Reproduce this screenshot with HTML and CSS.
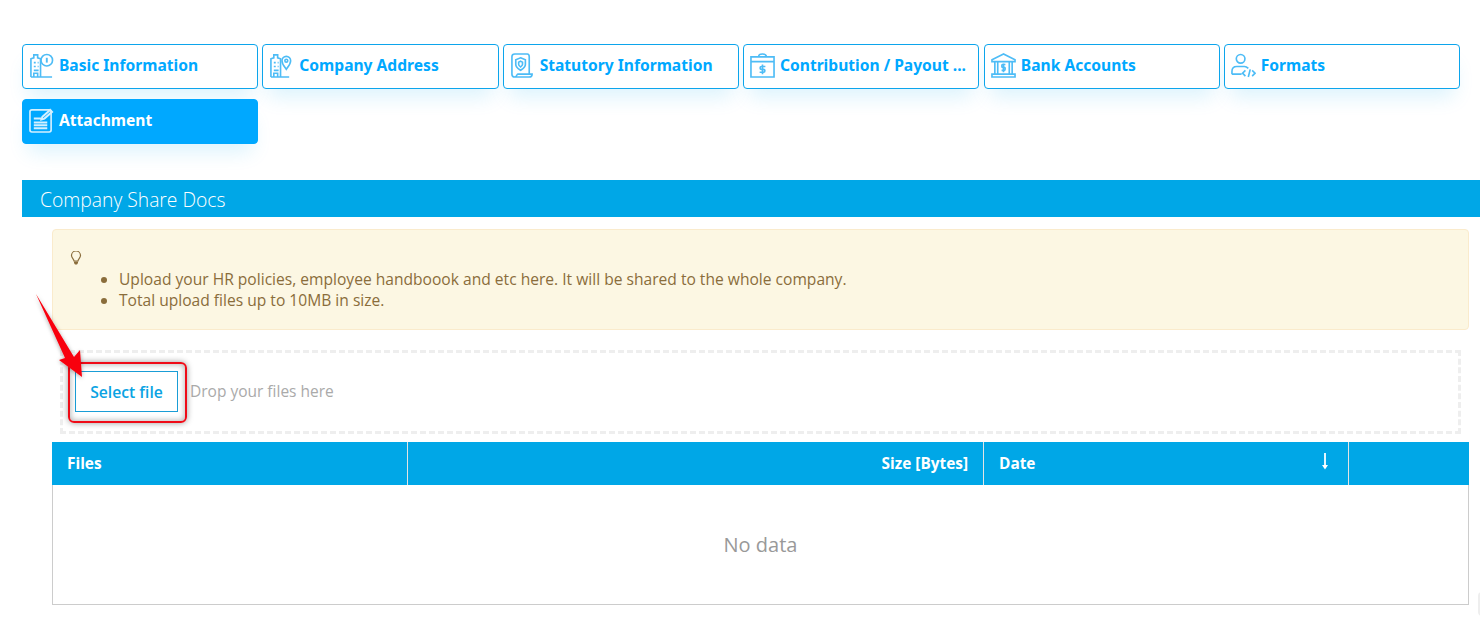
FILE: index.html
```html
<!DOCTYPE html>
<html lang="en">
<head>
<meta charset="utf-8">
<title>Company Share Docs</title>
<link rel="stylesheet" href="styles.css">
</head>
<body>
<div class="page">
  <nav class="tabs">
    <a class="tab">
      <svg class="ico" viewBox="0 0 26 26"><path d="M2 25V6l3-1V2h4v3l3 1v19M2 25h13M15 25h9M5 10h2M9 10h1M5 14h2M9 14h1M5 18h5M5 25v-4h4v4"/><circle cx="18.500" cy="7.500" r="6"/><path class="thick" d="M18.500 5v5"/></svg>
      <span>Basic Information</span>
    </a>
    <a class="tab">
      <svg class="ico" viewBox="0 0 26 26"><path d="M2 25V6l3-1V2h4v3l3 1v19M2 25h19M5 10h2M9 10h1M5 14h2M9 14h1M5 18h5M5 25v-4h4v4"/><path d="M18 17c-2-3-4.500-5.500-4.500-9a4.500 4.500 0 0 1 9 0c0 3.500-2.500 6-4.500 9z"/><circle cx="18" cy="8" r="1.500"/></svg>
      <span>Company Address</span>
    </a>
    <a class="tab">
      <svg class="ico" viewBox="0 0 26 26"><path d="M5 1h13c1 0 2 1 2 3v18M5 1C3 1 2 2 2 4v18c0 2 1 3 3 3h15c2 0 3-1 3-3H8c-1 0-1 3-3 3"/><path d="M11 5l5 2v5c0 3-2 4-5 6-3-2-5-3-5-6V7z"/><path d="M11 8.500l2 1v2.500c0 1-1 1.500-2 2.500-1-1-2-1.500-2-2.500V9.500z"/></svg>
      <span>Statutory Information</span>
    </a>
    <a class="tab">
      <svg class="ico" viewBox="0 0 26 26"><path d="M1 4h24v21H1zM1 9h24M9 4c0-2 1-3 4-3s4 1 4 3M16 14h-4c-2 0-2 3 0 3h2c2 0 2 3 0 3h-4M13 12v10"/></svg>
      <span>Contribution / Payout ...</span>
    </a>
    <a class="tab">
      <svg class="ico" viewBox="0 0 26 26"><path d="M13 1L1 7v2h24V7zM4 9v13M7 9v13M19 9v13M22 9v13M1 22h24v3H1zM15 12h-3c-1 0-1 3 0 3h2c1 0 1 3 0 3h-3M13 11v9"/></svg>
      <span>Bank Accounts</span>
    </a>
    <a class="tab">
      <svg class="ico" viewBox="0 0 26 26"><circle cx="10" cy="6" r="4.500"/><path d="M1 22v-3c0-3 2-5 5-5h8c2 0 3 1 4 2M1 22h10M15 18l-3 3 3 3M22 18l3 3-3 3M20 17l-2 8"/></svg>
      <span>Formats</span>
    </a>
    <a class="tab active">
      <svg class="ico" viewBox="0 0 26 26"><rect x="1" y="2" width="22" height="23" rx="2"/><path class="thick" d="M5 11h9M5 15h14M5 18h14M5 21h14M14 9l8-7 2 2-8 7-3 1z"/></svg>
      <span>Attachment</span>
    </a>
  </nav>

  <h2 class="section-title">Company Share Docs</h2>

  <div class="content">
    <div class="alert">
      <svg class="bulb" viewBox="0 0 12 14"><path d="M4 10c0-2-2.500-3-2.500-5.500a4.500 4.500 0 0 1 9 0C10.500 7 8 8 8 10z"/><path class="bulb-base" d="M4 10.500h4V12l-1 1.500H5L4 12z"/></svg>
      <ul class="alert-list">
        <li>Upload your HR policies, employee handboook and etc here. It will be shared to the whole company.</li>
        <li>Total upload files up to 10MB in size.</li>
      </ul>
    </div>

    <div class="dropzone">
      <button class="select-btn" type="button">Select file</button>
      <span class="drop-hint">Drop your files here</span>
    </div>

    <div class="grid">
      <div class="grid-head">
        <div class="cell files">Files</div>
        <div class="cell size">Size [Bytes]</div>
        <div class="cell date">Date<svg class="sort" viewBox="0 0 8 17"><path d="M4 0v13" /><path class="sort-tip" d="M1 12h6l-3 4.500z"/></svg></div>
        <div class="cell actions"></div>
      </div>
      <div class="grid-empty">No data</div>
    </div>
  </div>
</div>

<div class="callout-box"></div>
<svg class="callout-arrow" viewBox="0 0 60 100"><defs><filter id="sh" x="-30%" y="-30%" width="160%" height="160%"><feDropShadow dx="0" dy="1" stdDeviation="2" flood-color="#000" flood-opacity=".35"/></filter></defs><path d="M5 4L34 68l-6 2 23 17-2-27-6 7z" fill="#f8000f" filter="url(#sh)"/></svg>
<div class="scroll-nub"></div>
</body>
</html>
```
FILE: styles.css
```css
* { box-sizing: border-box; }
html, body { margin: 0; height: 631px; overflow: hidden; background: #fff; }
body { font-family: "Open Sans", "Noto Sans", sans-serif; color: #333; position: relative; }

.page { padding: 44px 0 0 22px; }

.tabs {
  display: grid;
  grid-template-columns: repeat(6, 1fr);
  column-gap: 4px;
  row-gap: 10px;
  width: 1438px;
}
.tab {
  height: 45px;
  display: flex;
  align-items: center;
  gap: 5px;
  padding: 0 6px 3px 6px;
  border: 1px solid #0ca5ec;
  border-radius: 4px;
  background: #fff;
  color: #00a8ff;
  font-family: "Noto Sans", "Open Sans", sans-serif;
  font-size: 15.600px;
  font-weight: 700;
  white-space: nowrap;
  box-shadow: 0 14px 20px -6px rgba(0, 168, 240, .14);
}
.tab:nth-child(5) { margin-left: .5px; }
.tab.active { background: #00a8ff; border-color: #00a8ff; color: #fff; }
.ico {
  width: 25px;
  height: 25px;
  flex: none;
  fill: none;
  stroke: #4dbcf6;
  stroke-width: 1.700;
}
.thick { stroke-width: 2; }
.tab.active .ico { stroke: #d5f0ff; }

.section-title {
  margin: 36px 0 0;
  height: 37px;
  padding-left: 18px;
  background: #00a7e7;
  color: #fff;
  font-size: 19.300px;
  font-weight: 300;
  line-height: 39px;
}

.content { padding: 12px 11px 0 30px; }

.alert {
  height: 101px;
  padding: 21px 17px 0;
  background: #fcf7e3;
  border: 1px solid #faebcc;
  border-radius: 4px;
  color: #8a6d3b;
  font-size: 15.600px;
  line-height: 21px;
}
.bulb { display: block; width: 12px; height: 14px; fill: none; stroke: #8a6d3b; stroke-width: 1.200; }
.bulb-base { fill: #8a6d3b; stroke: none; }
.alert-list { margin: 3px 0 0; padding: 0 0 0 49px; position: relative; top: 1px; }

.dropzone {
  margin: 20px 8px 0;
  height: 84px;
  border: 3px dashed #eee;
  padding: 18px 12px 0;
  display: flex;
  align-items: flex-start;
}
.select-btn {
  width: 103px;
  height: 41px;
  padding: 0;
  background: #fff;
  border: 1px solid #1a9dd6;
  color: #0aa3e3;
  font-family: inherit;
  font-size: 15.700px;
  font-weight: 600;
}
.drop-hint { margin-left: 12px; line-height: 40px; color: #aaa; font-size: 15.500px; }

.grid { margin-top: 8px; }
.grid-head { display: flex; height: 43px; background: #00a7e7; color: #fff; font-size: 15.400px; font-weight: 700; }
.cell { line-height: 43px; padding: 0 15px; border-right: 1px solid #e4e4e4; position: relative; }
.files { width: 356px; }
.size { width: 576px; text-align: right; }
.date { width: 365px; }
.actions { flex: 1; border-right: 0; }
.sort { position: absolute; left: 337px; top: 11px; width: 8px; height: 17px; stroke: #e0f7ff; stroke-width: 2; fill: none; }
.sort-tip { fill: #fff; stroke: none; }
.grid-empty {
  height: 120px;
  border: 1px solid #ccc;
  border-top: 0;
  color: #999;
  font-size: 20px;
  text-align: center;
  line-height: 119px;
}

.callout-box {
  position: absolute;
  left: 68px;
  top: 362px;
  width: 119px;
  height: 61px;
  border: 2px solid #ef0b17;
  border-radius: 6px;
  box-shadow: 0 0 6px rgba(0, 0, 0, .4), inset 0 0 6px rgba(0, 0, 0, .35);
}
.callout-arrow {
  position: absolute;
  left: 31px;
  top: 290px;
  width: 60px;
  height: 100px;
}
.scroll-nub {
  position: absolute;
  left: 1478px;
  top: 592px;
  width: 8px;
  height: 24px;
  border-radius: 4px;
  background: #eee;
}
```
